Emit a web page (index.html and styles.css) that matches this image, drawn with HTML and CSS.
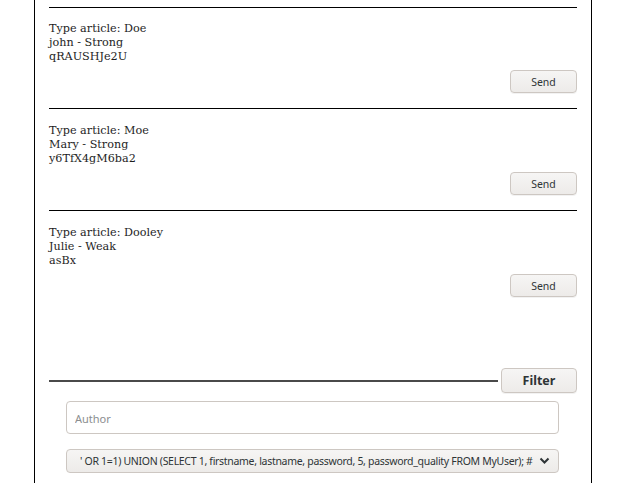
FILE: index.html
```html
<!DOCTYPE html>
<html>
<head>
<meta charset="utf-8">
<link rel="stylesheet" href="styles.css">
</head>
<body>
<div class="page">
  <div class="article">
    <div class="info">
      <div>Type article: Doe</div>
      <div>john - Strong</div>
      <div>qRAUSHJe2U</div>
    </div>
    <div class="actions"><button class="btn">Send</button></div>
  </div>
  <div class="article">
    <div class="info">
      <div>Type article: Moe</div>
      <div>Mary - Strong</div>
      <div>y6TfX4gM6ba2</div>
    </div>
    <div class="actions"><button class="btn">Send</button></div>
  </div>
  <div class="article">
    <div class="info">
      <div>Type article: Dooley</div>
      <div>Julie - Weak</div>
      <div>asBx</div>
    </div>
    <div class="actions"><button class="btn">Send</button></div>
  </div>
  <div class="filter-row">
    <div class="filter-line"></div>
    <button class="btn btn-filter">Filter</button>
  </div>
  <div class="filter-fields">
    <input class="field" type="text" placeholder="Author">
    <div class="select">
      <span class="select-text">' OR 1=1) UNION (SELECT 1, firstname, lastname, password, 5, password_quality FROM MyUser); #</span>
      <svg class="chevron" width="11" height="8" viewBox="0 0 11 8"><path d="M1.5 1.5 L5.5 5.5 L9.5 1.5" fill="none" stroke="#2e3436" stroke-width="2"/></svg>
    </div>
  </div>
</div>
</body>
</html>
```
FILE: styles.css
```css
html, body {
  margin: 0;
  padding: 0;
  background: #ffffff;
}
.page {
  margin-left: 34px;
  width: 558px;
  box-sizing: border-box;
  border-left: 1px solid #000;
  border-right: 1px solid #000;
  padding: 7px 14px 10px 14px;
  min-height: 483px;
}
.article {
  border-top: 1px solid #000;
  padding: 14px 0 15px 0;
}
.article + .article {
  padding-top: 15px;
}
.info {
  font-family: "DejaVu Serif", serif;
  font-size: 11.2px;
  line-height: 14px;
  color: #1e1e1e;
}
.actions {
  display: flex;
  justify-content: flex-end;
  margin-top: 6px;
}
.btn {
  font-family: "Noto Sans", sans-serif;
  font-size: 10.5px;
  color: #2e3436;
  background: linear-gradient(#f6f5f4, #edebe9);
  border: 1px solid #cdc7c2;
  border-radius: 4px;
  width: 67px;
  height: 23px;
  padding: 0;
  box-shadow: 0 1px 0 rgba(0,0,0,0.05);
}
.filter-row {
  display: flex;
  align-items: center;
  margin-top: 56px;
}
.filter-line {
  flex: 1;
  height: 2px;
  background: #4a4a4a;
  margin-right: 3px;
}
.btn-filter {
  width: 76px;
  height: 25px;
  font-size: 12.5px;
  font-weight: bold;
}
.filter-fields {
  padding: 8px 18px 0 17px;
  display: flex;
  flex-direction: column;
  gap: 15px;
}
.field {
  box-sizing: border-box;
  height: 33px;
  width: 100%;
  border: 1px solid #cdc7c2;
  border-radius: 4px;
  padding: 2px 8px 0 8px;
  font-family: "Noto Sans", sans-serif;
  font-size: 11px;
  color: #2e3436;
  background: #fff;
  outline: none;
}
.field::placeholder {
  color: #8b8e8f;
}
.select {
  box-sizing: border-box;
  height: 24px;
  display: flex;
  align-items: center;
  justify-content: space-between;
  border: 1px solid #cdc7c2;
  border-radius: 4px;
  background: linear-gradient(#f6f5f4, #edebe9);
  padding: 0 11px 0 13px;
  font-family: "Noto Sans", sans-serif;
  font-size: 10.5px;
  letter-spacing: -0.3px;
  color: #2e3436;
  white-space: nowrap;
}
.chevron {
  flex: none;
  margin-left: 6px;
}
```
